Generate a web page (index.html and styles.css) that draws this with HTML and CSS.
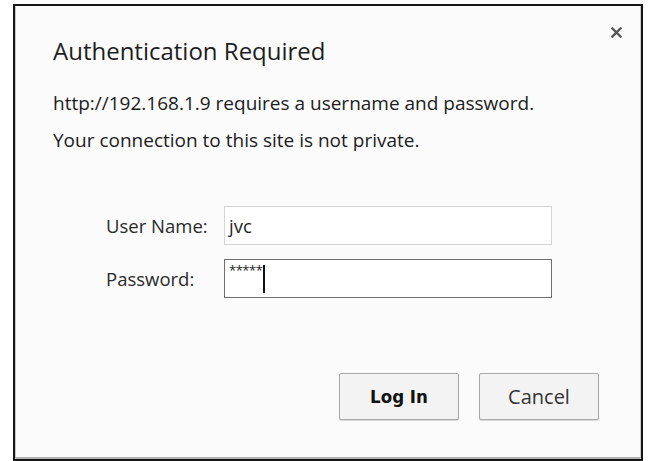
FILE: index.html
```html
<!DOCTYPE html>
<html lang="en">
<head>
<meta charset="utf-8">
<title>Authentication Required</title>
<link rel="stylesheet" href="styles.css">
</head>
<body>
<div class="frame">
  <div class="dialog">
    <button class="close" type="button" aria-label="Close">
      <svg width="11" height="11" viewBox="0 0 11 11"><path d="M1.5 1.5 L9.5 9.5 M9.5 1.5 L1.5 9.5" stroke="#555" stroke-width="2.4" stroke-linecap="square"/></svg>
    </button>
    <h1 class="title">Authentication Required</h1>
    <p class="msg msg-first">http://192.168.1.9 requires a username and password.</p>
    <p class="msg">Your connection to this site is not private.</p>
    <form class="fields">
      <label class="label" for="user">User Name:</label>
      <div class="input input-idle" id="user">jvc</div>
      <label class="label" for="pass">Password:</label>
      <div class="input input-focus" id="pass"><span class="stars">*****</span><span class="caret"></span></div>
    </form>
    <div class="actions">
      <button class="btn btn-primary" type="button">Log In</button>
      <button class="btn" type="button">Cancel</button>
    </div>
  </div>
</div>
</body>
</html>
```
FILE: styles.css
```css
html, body {
  margin: 0;
  padding: 0;
  background: #ffffff;
}

.frame {
  box-sizing: border-box;
  width: 630px;
  height: 457px;
  margin: 4px 0 0 13px;
  border: 2px solid #151515;
  background: #fbfbfb;
}

.dialog {
  position: relative;
  box-sizing: border-box;
  height: 100%;
  border-left: 1px solid #c8c8c8;
  border-bottom: 2px solid #b0b0b0;
  border-right: 1px solid #d0d0d0;
  padding: 0 0 0 37px;
  font-family: "Open Sans", "Noto Sans", sans-serif;
  color: #222;
}

.close {
  position: absolute;
  top: 19px;
  right: 16px;
  width: 15px;
  height: 15px;
  padding: 0;
  border: 0;
  background: none;
  display: flex;
  align-items: center;
  justify-content: center;
}

.title {
  margin: 0;
  padding-top: 29px;
  font-size: 24px;
  font-weight: 400;
  line-height: 32px;
  color: #1e1e1e;
}

.msg {
  margin: 13px 0 0;
  font-size: 19px;
  line-height: 24px;
  color: #202020;
}

.msg-first {
  margin-top: 24px;
}

.fields {
  display: grid;
  grid-template-columns: 118px 328px;
  row-gap: 14px;
  align-items: center;
  margin: 54px 0 0 53px;
}

.label {
  font-size: 18.5px;
  color: #2a2a2a;
}

.input {
  box-sizing: border-box;
  height: 39px;
  padding: 0 4px;
  display: flex;
  align-items: center;
  font-size: 18.5px;
  color: #1e1e1e;
  background: #ffffff;
}

.input-idle {
  border: 1px solid #d4d4d4;
}

.input-focus {
  border: 1px solid #707070;
}

.stars {
  align-self: flex-start;
  margin-top: 4px;
  font-size: 13px;
  line-height: 13px;
  letter-spacing: -0.5px;
}

.caret {
  display: inline-block;
  width: 2px;
  height: 28px;
  background: #111;
  margin-left: 1px;
}

.actions {
  display: flex;
  gap: 20px;
  justify-content: flex-end;
  margin: 75px 41px 0 0;
}

.btn {
  box-sizing: border-box;
  width: 120px;
  height: 47px;
  border: 1px solid #a9a9a9;
  border-radius: 2px;
  background: #f3f3f3;
  box-shadow: 0 1px 1px rgba(0, 0, 0, 0.15);
  font-family: "Open Sans", "Noto Sans", sans-serif;
  font-size: 20px;
  color: #333;
}

.btn-primary {
  font-family: "DejaVu Sans Condensed", "DejaVu Sans", sans-serif;
  font-stretch: condensed;
  font-weight: 700;
  font-size: 18.5px;
  color: #111;
}
```
